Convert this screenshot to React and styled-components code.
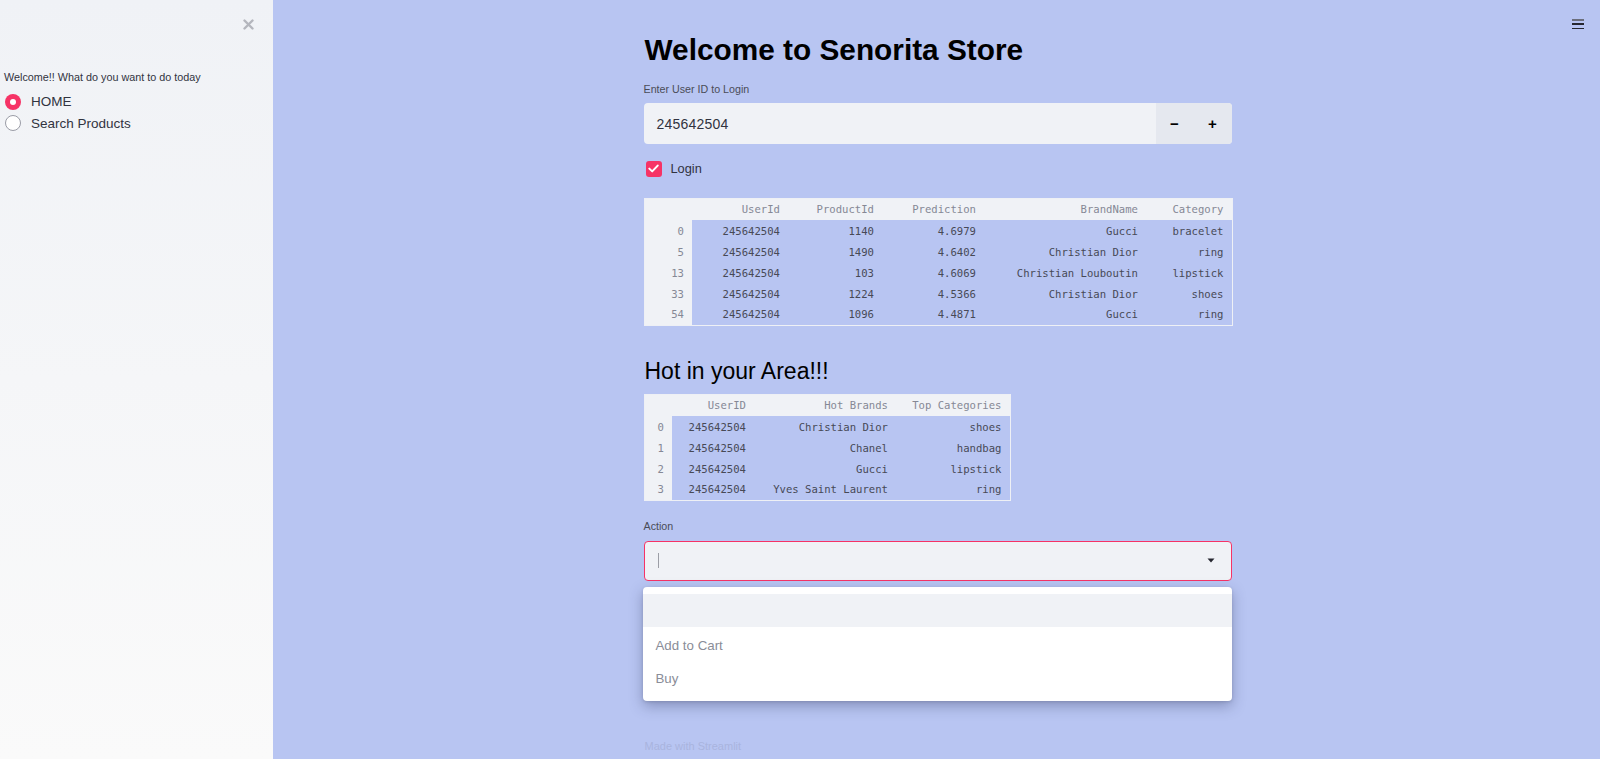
import React from 'react'
import styled, { createGlobalStyle } from 'styled-components'

const recommended = [
  ['0', '245642504', '1140', '4.6979', 'Gucci', 'bracelet'],
  ['5', '245642504', '1490', '4.6402', 'Christian Dior', 'ring'],
  ['13', '245642504', '103', '4.6069', 'Christian Louboutin', 'lipstick'],
  ['33', '245642504', '1224', '4.5366', 'Christian Dior', 'shoes'],
  ['54', '245642504', '1096', '4.4871', 'Gucci', 'ring'],
]

const hotRows = [
  ['0', '245642504', 'Christian Dior', 'shoes'],
  ['1', '245642504', 'Chanel', 'handbag'],
  ['2', '245642504', 'Gucci', 'lipstick'],
  ['3', '245642504', 'Yves Saint Laurent', 'ring'],
]

const DataTable = ({ headers, widths, rows, width }) => (
  <Table $w={width}>
    <colgroup>
      {widths.map((w, i) => <Col key={i} $w={w} />)}
    </colgroup>
    <thead>
      <tr>
        <HeadCell />
        {headers.map(h => <HeadCell key={h}>{h}</HeadCell>)}
      </tr>
    </thead>
    <tbody>
      {rows.map(r => (
        <tr key={r[0]}>
          <HeadCell>{r[0]}</HeadCell>
          {r.slice(1).map((c, i) => <Cell key={i}>{c}</Cell>)}
        </tr>
      ))}
    </tbody>
  </Table>
)

const App = () => (
  <Page>
    <GlobalStyle />
    <Sidebar>
      <CloseRow>
        <CloseButton>
          <svg width="11" height="11" viewBox="0 0 11 11">
            <path d="M1.5 1.5 L9.5 9.5 M9.5 1.5 L1.5 9.5" stroke="#b4b6bd" strokeWidth="2.4" strokeLinecap="round" />
          </svg>
        </CloseButton>
      </CloseRow>
      <SideLabel>Welcome!! What do you want to do today</SideLabel>
      <RadioRow>
        <RadioDot $checked />
        <RadioText>HOME</RadioText>
      </RadioRow>
      <RadioRow>
        <RadioDot />
        <RadioText>Search Products</RadioText>
      </RadioRow>
    </Sidebar>

    <Main>
      <Hamburger>
        <Bar $light />
        <Bar />
        <Bar />
      </Hamburger>
      <Content>
        <Title>Welcome to Senorita Store</Title>
        <FieldLabel $top={11}>Enter User ID to Login</FieldLabel>
        <NumberInput>
          <NumberValue>245642504</NumberValue>
          <Stepper>
            <StepButton>&minus;</StepButton>
            <StepButton>+</StepButton>
          </Stepper>
        </NumberInput>
        <CheckRow>
          <CheckBox>
            <svg width="11" height="9" viewBox="0 0 11 9">
              <path d="M1.3 4.6 L4.2 7.4 L9.7 1.6" fill="none" stroke="#fff" strokeWidth="2" strokeLinecap="round" strokeLinejoin="round" />
            </svg>
          </CheckBox>
          <CheckText>Login</CheckText>
        </CheckRow>

        <TableWrap $top={20}>
          <DataTable
            width={588}
            widths={[48, 96, 94, 102, 162, 86]}
            headers={['UserId', 'ProductId', 'Prediction', 'BrandName', 'Category']}
            rows={recommended}
          />
        </TableWrap>

        <Subtitle>Hot in your Area!!!</Subtitle>
        <TableWrap $top={8}>
          <DataTable
            width={366}
            widths={[28, 82, 142, 114]}
            headers={['UserID', 'Hot Brands', 'Top Categories']}
            rows={hotRows}
          />
        </TableWrap>

        <FieldLabel $top={17}>Action</FieldLabel>
        <SelectWrap>
          <Select>
            <Caret />
            <svg width="8" height="5" viewBox="0 0 8 5">
              <path d="M0.5 0.5 L7.5 0.5 L4 4.5 Z" fill="#262730" />
            </svg>
          </Select>
          <Menu>
            <Option $active />
            <Option>Add to Cart</Option>
            <Option>Buy</Option>
          </Menu>
        </SelectWrap>
        <Footer>Made with Streamlit</Footer>
      </Content>
    </Main>
  </Page>
)

const GlobalStyle = createGlobalStyle`
  html, body {
    margin: 0;
    padding: 0;
    height: 100%;
    overflow: hidden;
  }
  body {
    font-family: "Liberation Sans", Arial, sans-serif;
    color: #262730;
  }
  #root {
    height: 100%;
  }
`

const Page = styled.div`
  display: flex;
  height: 100vh;
  background: #b8c5f2;
`

const Sidebar = styled.aside`
  flex: 0 0 273px;
  display: flex;
  flex-direction: column;
  padding-left: 4px;
  box-sizing: border-box;
  background: linear-gradient(180deg, #f0f2f6 0%, #fafafa 100%);
`

const CloseRow = styled.div`
  display: flex;
  justify-content: flex-end;
  align-items: center;
  height: 48px;
  padding-right: 19px;
`

const CloseButton = styled.div`
  display: flex;
  align-items: center;
  justify-content: center;
  width: 12px;
  height: 12px;
`

const SideLabel = styled.div`
  margin-top: 22px;
  font-size: 10.8px;
  line-height: 15px;
  color: #31333f;
`

const RadioRow = styled.label`
  display: flex;
  align-items: center;
  gap: 10px;
  height: 21.5px;
  &:first-of-type {
    margin-top: 6px;
  }
`

const RadioDot = styled.span`
  position: relative;
  box-sizing: border-box;
  width: 16px;
  height: 16px;
  margin-left: 1px;
  border-radius: 50%;
  background: ${p => (p.$checked ? '#f63366' : '#fff')};
  border: ${p => (p.$checked ? 'none' : '1.5px solid #9a9ca6')};
  &::after {
    content: '';
    display: ${p => (p.$checked ? 'block' : 'none')};
    position: absolute;
    left: 5px;
    top: 5px;
    width: 6px;
    height: 6px;
    border-radius: 50%;
    background: #fff;
  }
`

const RadioText = styled.span`
  font-size: 13.5px;
  color: #31333f;
`

const Main = styled.main`
  position: relative;
  flex: 1;
  display: flex;
  justify-content: center;
`

const Hamburger = styled.div`
  position: absolute;
  top: 19px;
  right: 16px;
  display: flex;
  flex-direction: column;
  gap: 2.5px;
`

const Bar = styled.span`
  display: block;
  width: 12px;
  height: 1.8px;
  background: ${p => (p.$light ? '#6b6e7c' : '#262730')};
`

const Content = styled.div`
  width: 588px;
  display: flex;
  flex-direction: column;
  padding-top: 30px;
  margin-left: 2px;
`

const Title = styled.h1`
  margin: 0 0 0 1px;
  font-size: 29.8px;
  line-height: 40px;
  font-weight: 700;
  color: #000;
`

const FieldLabel = styled.div`
  margin-top: ${p => p.$top}px;
  font-size: 10.7px;
  line-height: 16px;
  color: #4a4c57;
`

const NumberInput = styled.div`
  display: flex;
  height: 41px;
  margin-top: 6px;
  border-radius: 4px;
  overflow: hidden;
  background: #f0f2f6;
`

const NumberValue = styled.div`
  flex: 1;
  display: flex;
  align-items: center;
  padding-left: 13px;
  font-size: 14px;
  color: #31333f;
  letter-spacing: 0.2px;
`

const Stepper = styled.div`
  display: flex;
  width: 76px;
  background: #e5e8ef;
`

const StepButton = styled.div`
  flex: 1;
  display: flex;
  align-items: center;
  justify-content: center;
  font-size: 15px;
  font-weight: 700;
  color: #000;
`

const CheckRow = styled.label`
  display: flex;
  align-items: center;
  gap: 9px;
  height: 18px;
  margin-top: 15.5px;
  padding-left: 2px;
`

const CheckBox = styled.span`
  display: flex;
  align-items: center;
  justify-content: center;
  width: 16px;
  height: 16px;
  border-radius: 3px;
  background: #f63366;
`

const CheckText = styled.span`
  font-size: 12.8px;
  color: #31333f;
`

const TableWrap = styled.div`
  margin-top: ${p => p.$top}px;
`

const Table = styled.table`
  width: ${p => p.$w}px;
  table-layout: fixed;
  border-collapse: collapse;
  border: 1px solid #eef0f5;
  font-family: "DejaVu Sans Mono", "Liberation Mono", monospace;
  font-size: 10.6px;
  thead tr {
    height: 22px;
  }
  tbody tr {
    height: 21px;
  }
`

const Col = styled.col`
  width: ${p => p.$w}px;
`

const HeadCell = styled.th`
  padding: 0 8px 0 0;
  text-align: right;
  font-weight: 400;
  white-space: nowrap;
  color: #858895;
  background: #f0f2f6;
`

const Cell = styled.td`
  padding: 0 8px 0 0;
  text-align: right;
  white-space: nowrap;
  color: #474956;
`

const Subtitle = styled.h2`
  margin: 30px 0 0 1px;
  font-size: 23px;
  line-height: 30px;
  font-weight: 400;
  color: #000;
`

const SelectWrap = styled.div`
  position: relative;
  margin-top: 7px;
`

const Select = styled.div`
  box-sizing: border-box;
  display: flex;
  align-items: center;
  justify-content: space-between;
  height: 40px;
  padding: 0 16px 0 13px;
  border: 1px solid #f63366;
  border-radius: 4px;
  background: #f0f2f6;
`

const Caret = styled.span`
  display: block;
  width: 1px;
  height: 15px;
  background: #9c9ea6;
`

const Menu = styled.div`
  position: absolute;
  top: 46px;
  left: -1px;
  right: 0;
  padding: 7px 0 7px;
  border-radius: 4px;
  background: #fff;
  box-shadow: 0 5px 14px rgba(40, 50, 90, 0.35), 0 1px 3px rgba(0, 0, 0, 0.12);
  z-index: 2;
`

const Option = styled.div`
  display: flex;
  align-items: center;
  height: 33.4px;
  padding-left: 13px;
  padding-top: 3px;
  box-sizing: border-box;
  font-size: 13.3px;
  color: #8a8d98;
  background: ${p => (p.$active ? '#f0f2f6' : '#fff')};
`

const Footer = styled.div`
  margin-top: 157px;
  margin-left: 1px;
  font-size: 11px;
  line-height: 16px;
  color: #a9b4de;
`

export default App
